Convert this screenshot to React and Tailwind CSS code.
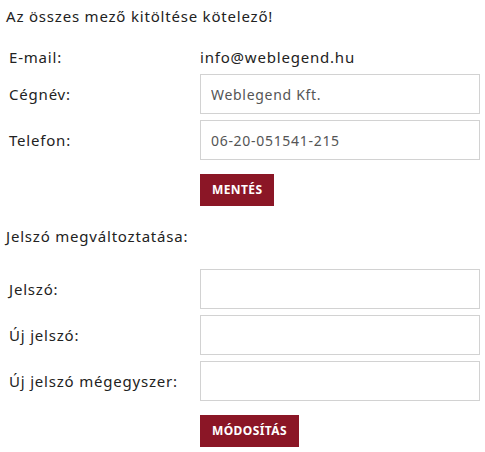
export default function App() {
  return (
    <div className="min-h-screen bg-white text-[#222] font-['Noto_Sans',sans-serif] text-[15px] tracking-[0.8px]">
      <p className="pl-[6px] pt-[4px] leading-[24px]">Az összes mező kitöltése kötelező!</p>

      <div className="mt-[15px] flex h-[28px] items-center">
        <span className="w-[200px] pl-[9px]">E-mail:</span>
        <span>info@weblegend.hu</span>
      </div>

      <Row label="Cégnév:" value="Weblegend Kft." className="mt-[3px]" />
      <Row label="Telefon:" value="06-20-051541-215" className="mt-[6px]" />
      <SubmitButton label="Mentés" />

      <p className="mt-[18px] pl-[6px] leading-[24px]">Jelszó megváltoztatása:</p>

      <Row label="Jelszó:" type="password" className="mt-[21px]" />
      <Row label="Új jelszó:" type="password" className="mt-[6px]" />
      <Row label="Új jelszó mégegyszer:" type="password" className="mt-[6px]" />
      <SubmitButton label="Módosítás" />
    </div>
  )
}

function Row({ label, value, type = "text", className = "" }) {
  return (
    <div className={"flex items-center " + className}>
      <label className="w-[200px] pl-[9px]">{label}</label>
      <input
        type={type}
        defaultValue={value}
        className="h-[40px] w-[280px] border border-[#d2d2d2] bg-white px-[10px] text-[14px] tracking-[0.7px] text-[#555] outline-none"
      />
    </div>
  )
}

function SubmitButton({ label }) {
  return (
    <div className="mt-[14px] pl-[200px]">
      <button className="h-[32px] bg-[#8b1626] px-[12px] text-[12px] font-bold uppercase tracking-[0.4px] text-white">
        {label}
      </button>
    </div>
  )
}
